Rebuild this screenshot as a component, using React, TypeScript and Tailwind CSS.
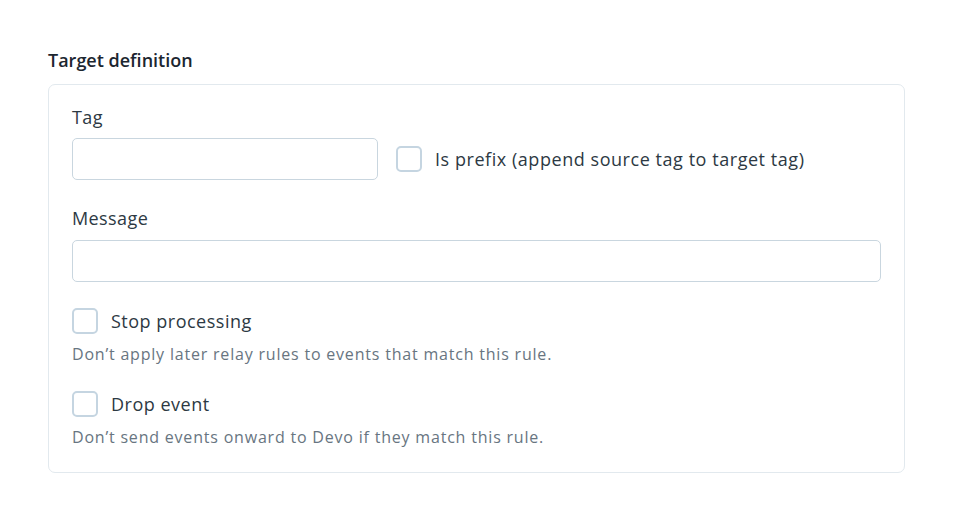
import React from 'react';

function Checkbox() {
  return <span className="inline-block h-[26px] w-[26px] shrink-0 rounded-[5px] border-2 border-[#c5d5e1] bg-white" />;
}

export default function App() {
  return (
    <div className="min-h-screen bg-white px-[48px] pt-[48px] font-['Open_Sans',sans-serif] text-[#2d3943]">
      <h2 className="mb-[12px] text-[18px] font-semibold leading-[24px] text-[#1c2630]">Target definition</h2>
      <div className="w-[857px] rounded-[7px] border border-[#e2e9ee] px-[23px] pb-[25px] pt-[20px]">
        <label className="block text-[18px] leading-[24px] tracking-[0.4px]">Tag</label>
        <div className="mt-[9px] flex items-center">
          <div className="h-[42px] w-[306px] rounded-[5px] border border-[#c9d6df]" />
          <div className="ml-[18px] flex items-center gap-[13px]">
            <Checkbox />
            <span className="text-[18px] leading-[24px] tracking-[0.55px]">Is prefix (append source tag to target tag)</span>
          </div>
        </div>
        <label className="mt-[26px] block text-[18px] leading-[24px] tracking-[0.4px]">Message</label>
        <div className="mt-[10px] h-[42px] w-full rounded-[5px] border border-[#c9d6df]" />
        <div className="mt-[26px] flex items-center gap-[13px]">
          <Checkbox />
          <span className="text-[18px] leading-[24px] tracking-[0.5px]">Stop processing</span>
        </div>
        <p className="mt-[10px] text-[16px] leading-[20px] tracking-[0.8px] text-[#687581]">
          Don’t apply later relay rules to events that match this rule.
        </p>
        <div className="mt-[27px] flex items-center gap-[13px]">
          <Checkbox />
          <span className="text-[18px] leading-[24px] tracking-[0.5px]">Drop event</span>
        </div>
        <p className="mt-[10px] text-[16px] leading-[20px] tracking-[0.8px] text-[#687581]">
          Don’t send events onward to Devo if they match this rule.
        </p>
      </div>
    </div>
  );
}
